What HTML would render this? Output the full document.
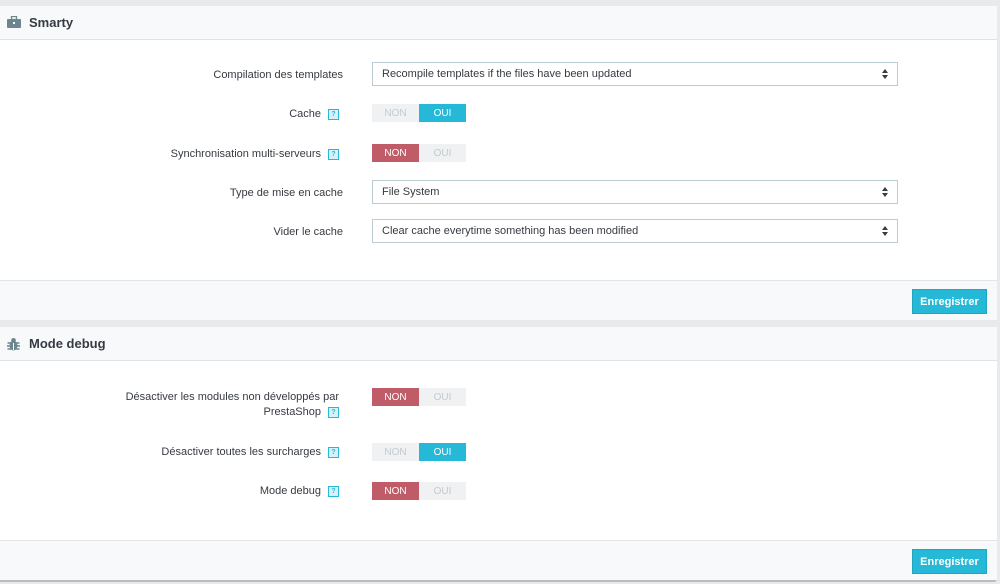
<!DOCTYPE html>
<html><head><style>
body{margin:0;width:1000px;height:584px;background:#e9eaeb;font-family:"Liberation Sans",sans-serif;position:relative;overflow:hidden;color:#363a41}
.p{position:absolute;left:0;width:997px;background:#fff;border-radius:0 3px 3px 0}
.h{position:absolute;left:0;right:0;top:0;height:33px;background:#f8f9fb;border-bottom:1px solid #dfe3e6;font-size:13px;font-weight:bold;line-height:34px;padding-left:29px;color:#363a41}
.f{position:absolute;left:0;right:0;height:39px;background:#f8f9fb;border-top:1px solid #e3e6e9}
.btn{position:absolute;right:10px;top:8px;width:75px;height:25px;background:#25b9d7;color:#fff;font-size:11px;font-weight:bold;text-align:center;line-height:25px;border:1px solid #1fa7c2;box-sizing:border-box}
.l{position:absolute;right:654px;font-size:11px;text-align:right;color:#363a41;line-height:15px}
.l.w{right:658px}
.q{display:inline-block;width:9px;height:9px;border:1px solid #25b9d7;background:#d6f2f8;font-size:7px;line-height:9px;text-align:center;color:#25b9d7;margin-left:7px;vertical-align:middle;font-weight:bold}
.s{position:absolute;left:372px;width:526px;height:24px;border:1px solid #bbcdd2;box-sizing:border-box;font-size:11px;line-height:23px;padding-left:9px;color:#363a41}
.s:after{content:"";position:absolute;right:9px;top:6px;border:3px solid transparent;border-bottom:4px solid #363a41;border-top:0}
.s:before{content:"";position:absolute;right:9px;top:12px;border:3px solid transparent;border-top:4px solid #363a41;border-bottom:0}
.t{position:absolute;left:372px;width:94px;height:18px;font-size:10px;line-height:19px;display:flex}
.t span{flex:1;text-align:center;background:#eff1f2;color:#c2cbd0}
.t .on{background:#25b9d7;color:#fff}
.t .no{background:#c05c67;color:#fff}
</style></head><body>
<div class="p" style="top:6px;height:314px">
<div class="h"><svg style="position:absolute;left:7px;top:10px" width="14" height="12" viewBox="0 0 14 12"><rect x="4.5" y="0.5" width="5" height="3" fill="none" stroke="#6c868e" stroke-width="1.3"/><rect x="0" y="3" width="14" height="9" rx="1" fill="#6c868e"/><rect x="6" y="6" width="2" height="2" fill="#fff"/></svg>Smarty</div>
<div class="l" style="top:62px">Compilation des templates</div>
<div class="s" style="top:56px">Recompile templates if the files have been updated</div>
<div class="l w" style="top:101px">Cache<span class="q">?</span></div>
<div class="t" style="top:98px"><span>NON</span><span class="on">OUI</span></div>
<div class="l w" style="top:141px">Synchronisation multi-serveurs<span class="q">?</span></div>
<div class="t" style="top:138px"><span class="no">NON</span><span>OUI</span></div>
<div class="l" style="top:180px">Type de mise en cache</div>
<div class="s" style="top:174px">File System</div>
<div class="l" style="top:219px">Vider le cache</div>
<div class="s" style="top:213px">Clear cache everytime something has been modified</div>
<div class="f" style="top:274px"><div class="btn">Enregistrer</div></div>
</div>
<div class="p" style="top:327px;height:253px;border-bottom:2px solid #b8bcbf">
<div class="h"><svg style="position:absolute;left:7px;top:11px" width="13" height="13" viewBox="0 0 13 13"><ellipse cx="6.5" cy="7.5" rx="4" ry="5" fill="#6c868e"/><circle cx="6.5" cy="2.3" r="2.3" fill="#6c868e"/><path d="M0.5 5h12M0 8h13M0.5 11h12" stroke="#6c868e" stroke-width="1.4"/><path d="M6.5 5v7" stroke="#fff" stroke-width="1"/></svg>Mode debug</div>
<div class="l w" style="top:63px">Désactiver les modules non développés par<br>PrestaShop<span class="q">?</span></div>
<div class="t" style="top:61px"><span class="no">NON</span><span>OUI</span></div>
<div class="l w" style="top:118px">Désactiver toutes les surcharges<span class="q">?</span></div>
<div class="t" style="top:116px"><span>NON</span><span class="on">OUI</span></div>
<div class="l w" style="top:157px">Mode debug<span class="q">?</span></div>
<div class="t" style="top:155px"><span class="no">NON</span><span>OUI</span></div>
<div class="f" style="top:213px"><div class="btn">Enregistrer</div></div>
</div>
</body></html>
